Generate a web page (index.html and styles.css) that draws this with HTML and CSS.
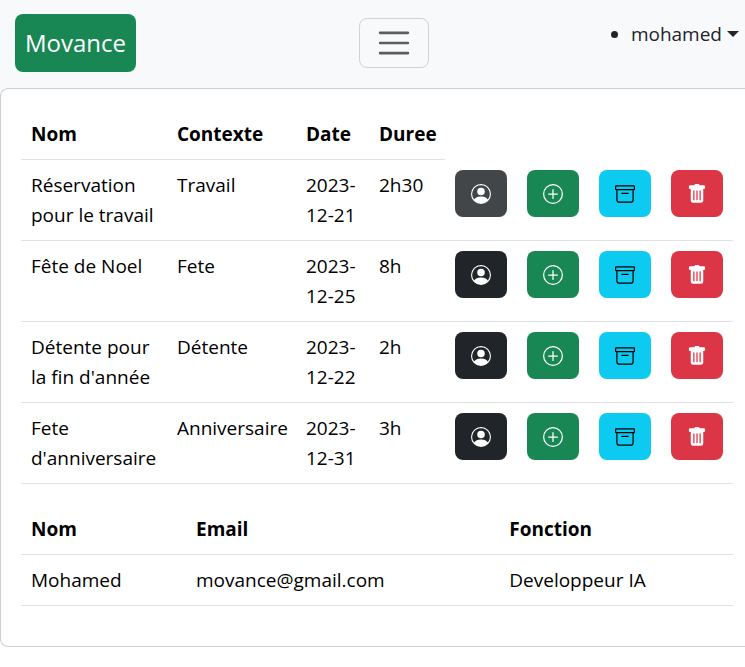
FILE: index.html
```html
<!DOCTYPE html>
<html lang="fr">
<head>
<meta charset="utf-8">
<meta name="viewport" content="width=device-width, initial-scale=1">
<title>Movance</title>
<link rel="stylesheet" href="styles.css">
</head>
<body>
<svg class="sprite" aria-hidden="true">
  <symbol id="person" viewBox="0 0 16 16"><path d="M11 6a3 3 0 1 1-6 0 3 3 0 0 1 6 0z"/><path fill-rule="evenodd" d="M0 8a8 8 0 1 1 16 0A8 8 0 0 1 0 8zm8-7a7 7 0 0 0-5.468 11.37C3.242 11.226 4.805 10 8 10s4.757 1.225 5.468 2.37A7 7 0 0 0 8 1z"/></symbol>
  <symbol id="plus" viewBox="0 0 16 16"><path d="M8 15A7 7 0 1 1 8 1a7 7 0 0 1 0 14zm0 1A8 8 0 1 0 8 0a8 8 0 0 0 0 16z"/><path d="M8 4a.5.5 0 0 1 .5.5v3h3a.5.5 0 0 1 0 1h-3v3a.5.5 0 0 1-1 0v-3h-3a.5.5 0 0 1 0-1h3v-3A.5.5 0 0 1 8 4z"/></symbol>
  <symbol id="archive" viewBox="0 0 16 16"><path d="M0 2a1 1 0 0 1 1-1h14a1 1 0 0 1 1 1v2a1 1 0 0 1-1 1v7.5a2.5 2.5 0 0 1-2.5 2.5h-9A2.5 2.5 0 0 1 1 12.5V5a1 1 0 0 1-1-1V2zm2 3v7.5A1.5 1.5 0 0 0 3.500 14h9a1.5 1.500 0 0 0 1.500-1.500V5H2zm13-3H1v2h14V2zM5 7.500a.5.5 0 0 1 .5-.5h5a.5.5 0 0 1 0 1h-5a.5.5 0 0 1-.5-.5z"/></symbol>
  <symbol id="trash" viewBox="0 0 16 16"><path d="M2.500 1a1 1 0 0 0-1 1v1a1 1 0 0 0 1 1H3v9a2 2 0 0 0 2 2h6a2 2 0 0 0 2-2V4h.5a1 1 0 0 0 1-1V2a1 1 0 0 0-1-1H10a1 1 0 0 0-1-1H7a1 1 0 0 0-1 1H2.500zm3 4a.5.5 0 0 1 .5.5v7a.5.5 0 0 1-1 0v-7a.5.5 0 0 1 .5-.5zM8 5a.5.5 0 0 1 .5.5v7a.5.5 0 0 1-1 0v-7A.5.5 0 0 1 8 5zm3 .5v7a.5.5 0 0 1-1 0v-7a.5.5 0 0 1 1 0z"/></symbol>
</svg>
<nav class="navbar">
  <a class="brand" href="#">Movance</a>
  <button class="toggler" type="button" aria-label="Menu">
    <svg class="bars" viewBox="0 0 30 30" aria-hidden="true"><path d="M4 7h22M4 15h22M4 23h22"/></svg>
  </button>
  <ul class="user-menu">
    <li><a class="user-link" href="#">mohamed</a></li>
  </ul>
</nav>
<main class="card">
  <table class="table reservations">
    <colgroup><col class="c-name"><col class="c-context"><col class="c-date"><col class="c-length"><col class="c-action"><col class="c-action"><col class="c-action"><col class="c-action"></colgroup>
    <thead>
      <tr><th>Nom</th><th>Contexte</th><th>Date</th><th>Duree</th></tr>
    </thead>
    <tbody>
      <tr>
        <td>Réservation pour le travail</td><td>Travail</td><td>2023-12-21</td><td>2h30</td>
        <td><button class="btn dark active" type="button" aria-label="Profil"><svg><use href="#person"/></svg></button></td>
        <td><button class="btn success" type="button" aria-label="Ajouter"><svg><use href="#plus"/></svg></button></td>
        <td><button class="btn info" type="button" aria-label="Archiver"><svg><use href="#archive"/></svg></button></td>
        <td><button class="btn danger" type="button" aria-label="Supprimer"><svg><use href="#trash"/></svg></button></td>
      </tr>
      <tr>
        <td>Fête de Noel</td><td>Fete</td><td>2023-12-25</td><td>8h</td>
        <td><button class="btn dark" type="button" aria-label="Profil"><svg><use href="#person"/></svg></button></td>
        <td><button class="btn success" type="button" aria-label="Ajouter"><svg><use href="#plus"/></svg></button></td>
        <td><button class="btn info" type="button" aria-label="Archiver"><svg><use href="#archive"/></svg></button></td>
        <td><button class="btn danger" type="button" aria-label="Supprimer"><svg><use href="#trash"/></svg></button></td>
      </tr>
      <tr>
        <td>Détente pour la fin d'année</td><td>Détente</td><td>2023-12-22</td><td>2h</td>
        <td><button class="btn dark" type="button" aria-label="Profil"><svg><use href="#person"/></svg></button></td>
        <td><button class="btn success" type="button" aria-label="Ajouter"><svg><use href="#plus"/></svg></button></td>
        <td><button class="btn info" type="button" aria-label="Archiver"><svg><use href="#archive"/></svg></button></td>
        <td><button class="btn danger" type="button" aria-label="Supprimer"><svg><use href="#trash"/></svg></button></td>
      </tr>
      <tr>
        <td>Fete d'anniversaire</td><td>Anniversaire</td><td>2023-12-31</td><td>3h</td>
        <td><button class="btn dark" type="button" aria-label="Profil"><svg><use href="#person"/></svg></button></td>
        <td><button class="btn success" type="button" aria-label="Ajouter"><svg><use href="#plus"/></svg></button></td>
        <td><button class="btn info" type="button" aria-label="Archiver"><svg><use href="#archive"/></svg></button></td>
        <td><button class="btn danger" type="button" aria-label="Supprimer"><svg><use href="#trash"/></svg></button></td>
      </tr>
    </tbody>
  </table>
  <table class="table members">
    <colgroup><col class="m-name"><col class="m-email"><col class="m-role"></colgroup>
    <thead>
      <tr><th>Nom</th><th>Email</th><th>Fonction</th></tr>
    </thead>
    <tbody>
      <tr><td>Mohamed</td><td>movance@gmail.com</td><td>Developpeur IA</td></tr>
    </tbody>
  </table>
</main>
</body>
</html>
```
FILE: styles.css
```css
* { box-sizing: border-box; }

body {
  margin: 0;
  background: #fff;
  color: #212529;
  font-family: "Segoe UI", "Open Sans", "Noto Sans", sans-serif;
  font-size: 19px;
  line-height: 30px;
}

.sprite { display: none; }

.navbar {
  display: grid;
  grid-template-columns: 344fr 70px 310fr;
  align-items: start;
  height: 88px;
  padding: 14px 6px 0 15px;
  background: #f8f9fa;
}

.brand {
  justify-self: start;
  padding: 10px;
  border-radius: 8px;
  background: #198754;
  color: #fff;
  font-size: 24px;
  line-height: 38px;
  text-decoration: none;
}

.toggler {
  display: flex;
  align-items: center;
  justify-content: center;
  height: 50px;
  margin-top: 4px;
  padding: 0;
  border: 1px solid #d0d2d4;
  border-radius: 8px;
  background: transparent;
}

.bars {
  width: 38px;
  height: 38px;
  fill: none;
  stroke: #5c5d5e;
  stroke-width: 2;
  stroke-linecap: round;
}

.user-menu {
  justify-self: end;
  margin: 5px 0 0;
  padding: 0;
}

.user-link {
  display: flex;
  align-items: center;
  gap: 5px;
  color: inherit;
  text-decoration: none;
}

.user-link::after {
  content: "";
  border: 6px solid transparent;
  border-top-color: currentColor;
  border-bottom: 0;
}

.card {
  padding: 20px 12px 20px 20px;
  border: 1px solid #cfcfcf;
  border-right: 0;
  border-radius: 8px 0 0 8px;
  background: #fff;
  color: #000;
}

.table {
  width: 100%;
  margin-bottom: 20px;
  border-collapse: separate;
  border-spacing: 0;
  table-layout: fixed;
}

.table th,
.table td {
  padding: 10px;
  border-bottom: 1px solid #dee2e6;
  text-align: left;
  vertical-align: top;
}

.table th { font-weight: 700; }

.c-context { width: 129px; }
.c-date { width: 73px; }
.c-length { width: 76px; }
.c-action { width: 72px; }
.m-name { width: 165px; }
.m-email { width: 44%; }

.btn {
  display: flex;
  align-items: center;
  justify-content: center;
  width: 52px;
  height: 47px;
  padding: 0;
  border: 0;
  border-radius: 8px;
  color: #fff;
}

.btn svg {
  width: 20px;
  height: 20px;
  fill: currentColor;
}

.dark { background: #212529; }
.dark.active { background: #424649; }
.success { background: #198754; }
.info { background: #0dcaf0; color: #000; }
.danger { background: #dc3545; }
```
